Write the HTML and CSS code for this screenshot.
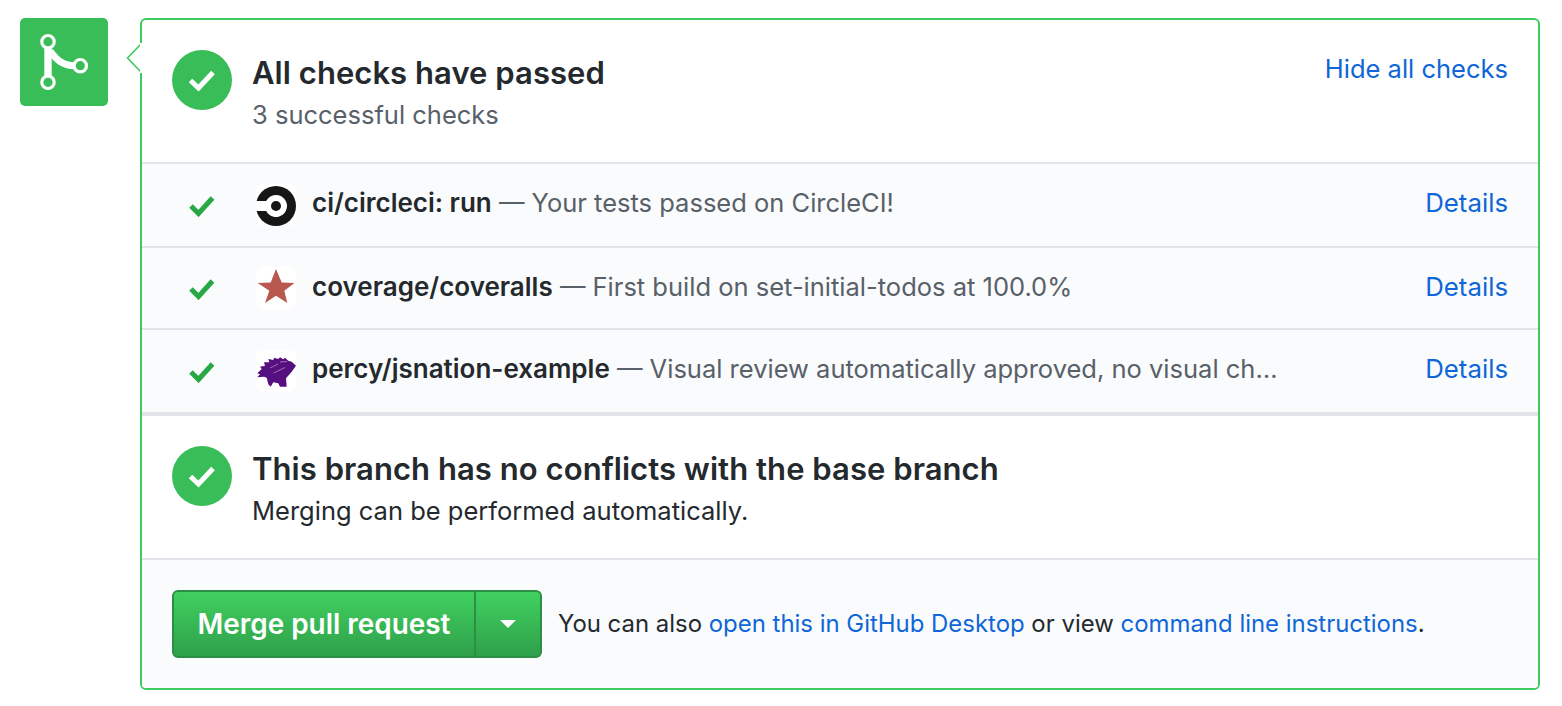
FILE: index.html
```html
<!DOCTYPE html>
<html lang="en">
<head>
<meta charset="utf-8">
<title>Merge status</title>
<link rel="stylesheet" href="styles.css">
</head>
<body>
<div class="timeline">
  <div class="merge-badge">
    <svg width="88" height="88" viewBox="0 0 88 88" fill="none" stroke="#fff">
      <path d="M28 28 V60" stroke-width="7.400"/>
      <path d="M30 33 C36 41 42 47.700 55 47.700" stroke-width="7"/>
      <circle cx="28" cy="23.700" r="6.200" stroke-width="3.200" fill="#39bd59"/>
      <circle cx="28" cy="64.300" r="6.200" stroke-width="3.200" fill="#39bd59"/>
      <circle cx="60.300" cy="47.700" r="6.200" stroke-width="3.200" fill="#39bd59"/>
    </svg>
  </div>
  <div class="card">
    <svg class="pointer" width="16" height="30" viewBox="0 0 16 30"><path d="M15 1 L1.500 15 L15 29" fill="#fff" stroke="#3ccb5e" stroke-width="1.600"/><path d="M14 0V30H16V0Z" fill="#fff"/></svg>
    <section class="status status-head">
      <span class="disc"><svg width="28" height="24" viewBox="0 0 28 24"><path d="M2.500 12.500 L10.500 20 L25 4.500" fill="none" stroke="#fff" stroke-width="5"/></svg></span>
      <div class="status-text">
        <h3>All checks have passed</h3>
        <p class="muted">3 successful checks</p>
      </div>
      <a class="link hide" href="#">Hide all checks</a>
    </section>
    <div class="checks">
      <div class="check">
        <svg class="tick" width="26" height="22" viewBox="0 0 26 22"><path d="M2 11 L9.500 18.500 L23.500 3" fill="none" stroke="#28a745" stroke-width="5"/></svg>
        <span class="avatar">
          <svg width="40" height="42" viewBox="0 0 40 42"><circle cx="20" cy="22" r="20" fill="#161616"/><path d="M0 17 H10.200 A11 11 0 1 1 10.200 27 H0Z" fill="#fff"/><circle cx="20" cy="22" r="5" fill="#161616"/></svg>
        </span>
        <div class="check-text"><strong>ci/circleci: run</strong> — Your tests passed on CircleCI!</div>
        <a class="link details" href="#">Details</a>
      </div>
      <div class="check check-mid">
        <svg class="tick" width="26" height="22" viewBox="0 0 26 22"><path d="M2 11 L9.500 18.500 L23.500 3" fill="none" stroke="#28a745" stroke-width="5"/></svg>
        <span class="avatar">
          <svg width="40" height="42" viewBox="0 0 40 42"><path d="M20 2 L25.700 15.500 L38.500 16 L28.300 23.700 L31.300 36 L20 28.700 L9 36 L13.300 23.700 L1.700 16 L14.700 15.500Z" fill="#b9584f"/></svg>
        </span>
        <div class="check-text"><strong>coverage/coveralls</strong> — First build on set-initial-todos at 100.0%</div>
        <a class="link details" href="#">Details</a>
      </div>
      <div class="check">
        <svg class="tick" width="26" height="22" viewBox="0 0 26 22"><path d="M2 11 L9.500 18.500 L23.500 3" fill="none" stroke="#28a745" stroke-width="5"/></svg>
        <span class="avatar">
          <svg width="40" height="42" viewBox="0 0 40 42"><path d="M40 15.700 L35.700 11.700 L32.300 10.700 L29 7.700 L27.300 9.300 L24 7.300 L22.300 9 L18 7.700 L17.300 10 L12.300 9 L13.300 12.300 L8 12.300 L9 15.700 L4 16.700 L5.700 19 L1.300 23.300 L4 24.300 L1.300 27.300 L8 26.700 L10.700 27.700 L12.300 34.300 L14.700 36.700 L17.300 32.300 L22.300 33.300 L24 36.700 L30.700 36.700 L30 28.300 L35.700 21.700Z" fill="#560f7e"/><path d="M14 18 L22 14 M17.500 23 L29 17.500 M24 12 L31 11.500" stroke="#b79cc6" stroke-width="0.700"/></svg>
        </span>
        <div class="check-text"><strong>percy/jsnation-example</strong> — Visual review automatically approved, no visual ch…</div>
        <a class="link details" href="#">Details</a>
      </div>
    </div>
    <section class="status status-merge">
      <span class="disc"><svg width="28" height="24" viewBox="0 0 28 24"><path d="M2.500 12.500 L10.500 20 L25 4.500" fill="none" stroke="#fff" stroke-width="5"/></svg></span>
      <div class="status-text">
        <h3>This branch has no conflicts with the base branch</h3>
        <p>Merging can be performed automatically.</p>
      </div>
    </section>
    <footer class="actions">
      <div class="btn-group">
        <button class="btn btn-main" type="button">Merge pull request</button>
        <button class="btn btn-caret" type="button" aria-label="Select merge method"><span class="caret"></span></button>
      </div>
      <p class="hint">You can also <a class="link" href="#">open this in GitHub Desktop</a> or view <a class="link" href="#">command line instructions</a>.</p>
    </footer>
  </div>
</div>
</body>
</html>
```
FILE: styles.css
```css
* { box-sizing: border-box; }
html, body { margin: 0; background: #fff; }
body {
  font-family: Inter, "Liberation Sans", sans-serif;
  font-size: 25.500px;
  color: #24292e;
  width: 1562px;
  height: 706px;
  overflow: hidden;
}
h3, p { margin: 0; }
.link { color: #0f66d8; text-decoration: none; }
.timeline { display: flex; gap: 32px; padding: 18px 22px 0 20px; }
.merge-badge {
  flex: none;
  width: 88px;
  height: 88px;
  background: #39bd59;
  border-radius: 5px;
}
.merge-badge svg { display: block; }
.card {
  position: relative;
  flex: 1;
  height: 672px;
  border: 2px solid #3ccb5e;
  border-radius: 6px;
  background: #fff;
}
.pointer { position: absolute; left: -16px; top: 23px; }
.status { display: flex; align-items: flex-start; padding: 30px 30px 0; }
.status-head { height: 144px; border-bottom: 2px solid #e2e4e9; }
.status-merge { height: 144px; border-bottom: 2px solid #e2e4e9; }
.disc {
  flex: none;
  width: 60px;
  height: 60px;
  border-radius: 50%;
  background: #39bd59;
  display: flex;
  align-items: center;
  justify-content: center;
}
.status-text { flex: 1; margin-left: 20px; }
.status-text h3 { font-size: 31px; font-weight: 600; line-height: 46px; letter-spacing: 0.050px; }
.status-text p { line-height: 42px; margin-top: -2px; }
.muted { color: #586069; }
.hide { margin-top: -1px; line-height: 40px; }
.checks { background: #fafbfc; border-bottom: 4px solid #e2e4e9; }
.check {
  height: 82px;
  display: flex;
  align-items: center;
  padding: 0 30px 0 47px;
  color: #586069;
}
.check + .check { border-top: 2px solid #e2e4e9; }
.check:last-child { height: 84px; }
.tick { flex: none; margin: 2px 41px 0 0; }
.avatar {
  flex: none;
  width: 40px;
  height: 42px;
  background: #fff;
  border-radius: 6px;
  margin-right: 16px;
}
.avatar svg { display: block; }
.check-text {
  flex: 1;
  min-width: 0;
  margin-bottom: 5px;
  white-space: nowrap;
}
.details { margin-bottom: 5px; font-size: 25.800px; }
.check-mid .check-text, .check-mid .details { margin-bottom: 3px; }
.check-text strong { color: #24292e; font-size: 26px; font-weight: 600; }
.actions {
  height: 128px;
  background: #fafbfc;
  border-radius: 0 0 4px 4px;
  display: flex;
  align-items: flex-start;
  padding: 30px 30px 0;
}
.btn-group { display: flex; flex: none; }
.btn {
  height: 68px;
  border: 2px solid #2d8f46;
  background: linear-gradient(#40d060, #2fa04a);
  color: #fff;
  font: 600 27.900px Inter, "Liberation Sans", sans-serif;
  padding: 0;
}
.btn-main { width: 303px; border-radius: 6px 0 0 6px; border-right-width: 1px; }
.btn-caret { width: 67px; border-radius: 0 6px 6px 0; border-left-width: 1px; display: flex; align-items: center; justify-content: center; }
.caret { border: 8px solid transparent; border-top-color: #fff; border-bottom-width: 0; }
.hint { margin-left: 16px; line-height: 68px; white-space: nowrap; font-size: 23.930px; }
```
